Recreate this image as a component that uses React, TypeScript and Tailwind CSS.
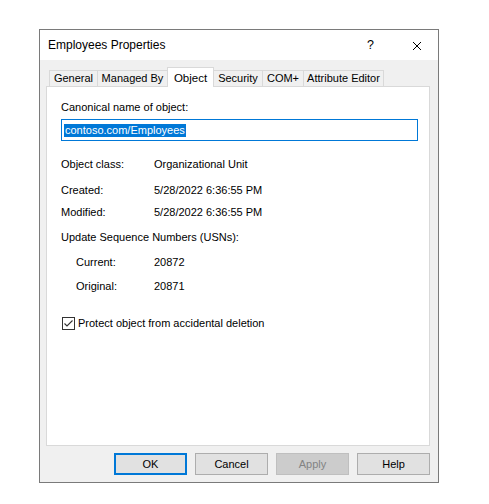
import React from "react";

const tabs = [
  { name: "General", w: 49 },
  { name: "Managed By", w: 71 },
  { name: "Object", w: 47, active: true },
  { name: "Security", w: 50 },
  { name: "COM+", w: 42 },
  { name: "Attribute Editor", w: 81 },
];

function Row({ label, value, indent, className }: { label: string; value: string; indent?: boolean; className?: string }) {
  return (
    <div className={"flex h-[14px] items-center leading-[14px] " + (className ?? "")}>
      <div className={indent ? "w-[93px] pl-[15px]" : "w-[93px]"}>{label}</div>
      <div>{value}</div>
    </div>
  );
}

function Btn({ label, primary, disabled }: { label: string; primary?: boolean; disabled?: boolean }) {
  const cls = primary
    ? "border-2 border-[#0078d7] bg-[#e1e1e1] text-black"
    : disabled
    ? "border border-[#bfbfbf] bg-[#cccccc] text-[#838383]"
    : "border border-[#adadad] bg-[#e1e1e1] text-black";
  return (
    <div className={"flex h-[22px] w-[73px] items-center justify-center text-[11px] " + cls}>{label}</div>
  );
}

export default function App() {
  return (
    <div className="min-h-[504px] w-[489px] bg-white pl-[39px] pt-[29px] font-['Liberation_Sans',Arial,sans-serif] text-[11px] text-black">
      <div className="flex w-[400px] flex-col border border-[#7a7a7a] bg-[#f0f0f0]">
        {/* Title bar */}
        <div className="relative flex h-[30px] items-center bg-white pl-[8px]">
          <span className="text-[12px] leading-none">Employees Properties</span>
          <span className="absolute left-[327px] top-[9px] text-[12.5px] leading-none">?</span>
          <svg className="absolute left-[372px] top-[11px]" width="10" height="10" viewBox="0 0 10 10">
            <path d="M1 1 L9 9 M9 1 L1 9" stroke="#000" strokeWidth="1" fill="none" />
          </svg>
        </div>
        {/* Body */}
        <div className="flex flex-col pl-[6px] pr-[8px] pt-[7px] pb-[7px]">
          {/* Tabs */}
          <div className="relative z-10 flex h-[19px] items-end pl-[3px]">
            {tabs.map((t) =>
              t.active ? (
                <div
                  key={t.name}
                  style={{ width: t.w }}
                  className="-mb-px -ml-px flex h-[20px] shrink-0 items-start justify-center border border-b-0 border-[#d9d9d9] bg-white pt-[2px] text-[11.5px]"
                >
                  {t.name}
                </div>
              ) : (
                <div
                  key={t.name}
                  style={{ width: t.w }}
                  className="-ml-px flex h-[16px] shrink-0 items-center justify-center border border-b-0 border-[#d9d9d9] bg-[#f0f0f0] first:ml-0"
                >
                  {t.name}
                </div>
              )
            )}
          </div>
          {/* Panel */}
          <div className="flex h-[360px] w-[384px] flex-col border border-[#d9d9d9] bg-white pl-[14px] pt-[13px]">
            <div className="leading-[14px]">Canonical name of object:</div>
            <div className="mt-[5px] flex h-[22px] w-[357px] items-center border border-[#0078d7] pl-[2px]">
              <span className="bg-[#0078d7] px-px leading-[13px] text-white">contoso.com/Employees</span>
            </div>
            <Row className="mt-[16px]" label="Object class:" value="Organizational Unit" />
            <Row className="mt-[12px]" label="Created:" value="5/28/2022 6:36:55 PM" />
            <Row className="mt-[8px]" label="Modified:" value="5/28/2022 6:36:55 PM" />
            <div className="mt-[11px] h-[14px] leading-[14px]">Update Sequence Numbers (USNs):</div>
            <Row className="mt-[11px]" indent label="Current:" value="20872" />
            <Row className="mt-[10px]" indent label="Original:" value="20871" />
            <div className="mt-[23px] flex items-center">
              <div className="ml-px flex h-[13px] w-[13px] items-center justify-center border border-[#333333] bg-white">
                <svg width="11" height="11" viewBox="0 0 11 11">
                  <path d="M1.5 5.5 L4 8 L9.5 2.5" stroke="#333" strokeWidth="1.1" fill="none" />
                </svg>
              </div>
              <span className="ml-[3px] leading-[14px]">Protect object from accidental deletion</span>
            </div>
          </div>
          {/* Buttons */}
          <div className="mt-[7px] flex justify-end gap-[8px]">
            <Btn label="OK" primary />
            <Btn label="Cancel" />
            <Btn label="Apply" disabled />
            <Btn label="Help" />
          </div>
        </div>
      </div>
    </div>
  );
}
